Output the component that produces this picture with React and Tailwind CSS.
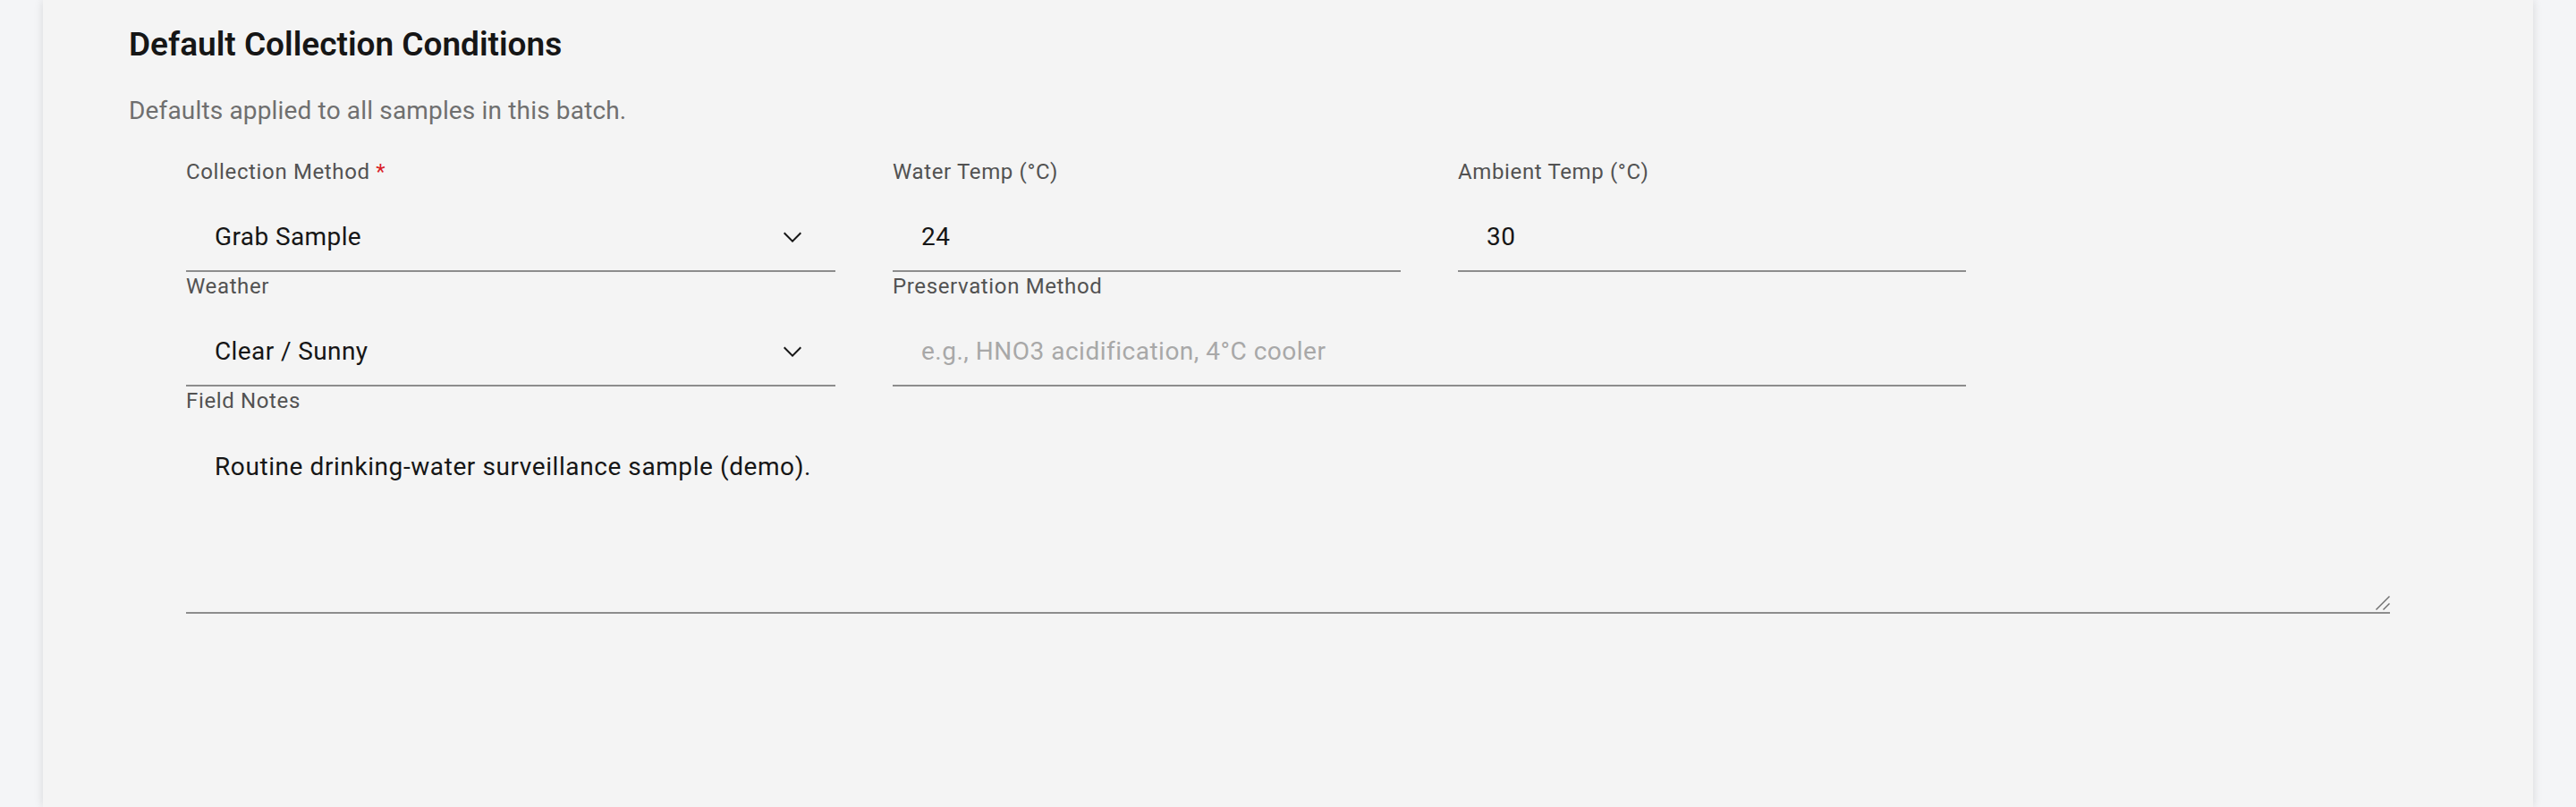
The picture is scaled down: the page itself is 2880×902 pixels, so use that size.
import React from "react";

function Chevron() {
  return (
    <svg width="32" height="32" viewBox="0 0 16 16" fill="#161616" aria-hidden="true" className="shrink-0">
      <path d="M8 11L3 6l.7-.7L8 9.6l4.3-4.3.7.7z" />
    </svg>
  );
}

function Label({ children, required }) {
  return (
    <div className="mb-4 h-8 text-[24px] leading-8 tracking-[0.64px] text-[#525252] whitespace-nowrap">
      {children}
      {required && <span className="text-[#da1e28]"> *</span>}
    </div>
  );
}

function SelectField({ label, value, required }) {
  return (
    <div>
      <Label required={required}>{label}</Label>
      <div className="flex h-20 items-center justify-between border-b-2 border-[#8d8d8d] pl-8 pr-8 pt-[3px] text-[28px] tracking-[0.4px] text-[#161616]">
        <span>{value}</span>
        <Chevron />
      </div>
    </div>
  );
}

function TextField({ label, value, placeholder, className = "" }) {
  return (
    <div className={className}>
      <Label>{label}</Label>
      <input
        readOnly
        value={value}
        placeholder={placeholder}
        className="block h-20 w-full border-b-2 border-[#8d8d8d] bg-transparent px-8 pt-[3px] text-[28px] tracking-[0.5px] text-[#161616] outline-none placeholder:text-[#a8a8a8]"
      />
    </div>
  );
}

export default function App() {
  return (
    <div className="min-h-screen bg-[#f4f5f7] px-12 font-[family-name:Roboto,sans-serif]">
      <div className="min-h-screen bg-[#f4f4f4] px-24 pt-[26px] shadow-[0_0_10px_rgba(0,0,0,0.12)]">
        <h2 className="text-[37px] font-semibold leading-[48px] text-[#161616]">
          Default Collection Conditions
        </h2>
        <p className="mt-[30px] text-[28px] leading-10 tracking-[0.16px] text-[#6f6f6f]">
          Defaults applied to all samples in this batch.
        </p>

        <div className="mt-8 px-16">
          <div className="grid grid-cols-[726px_568px_568px] gap-x-16">
            <SelectField label="Collection Method" value="Grab Sample" required />
            <TextField label="Water Temp (°C)" value="24" />
            <TextField label="Ambient Temp (°C)" value="30" />
            <SelectField label="Weather" value="Clear / Sunny" />
            <TextField
              label="Preservation Method"
              value=""
              placeholder="e.g., HNO3 acidification, 4°C cooler"
              className="col-span-2"
            />
          </div>

          <div>
            <Label>Field Notes</Label>
            <div className="relative">
              <textarea
                readOnly
                rows={4}
                defaultValue="Routine drinking-water surveillance sample (demo)."
                className="block h-[206px] w-full resize-none border-b-2 border-[#8d8d8d] bg-transparent px-8 py-[22px] text-[28px] leading-10 tracking-[0.58px] text-[#161616] outline-none"
              />
              <svg
                width="16"
                height="16"
                viewBox="0 0 16 16"
                className="pointer-events-none absolute bottom-[4px] right-0"
                aria-hidden="true"
              >
                <path d="M0.5 15.5L15.5 0.5" stroke="#6f6f6f" strokeWidth="1.4" />
                <path d="M8.5 15.5L15.5 8.5" stroke="#6f6f6f" strokeWidth="1.4" />
              </svg>
            </div>
          </div>
        </div>
      </div>
    </div>
  );
}
